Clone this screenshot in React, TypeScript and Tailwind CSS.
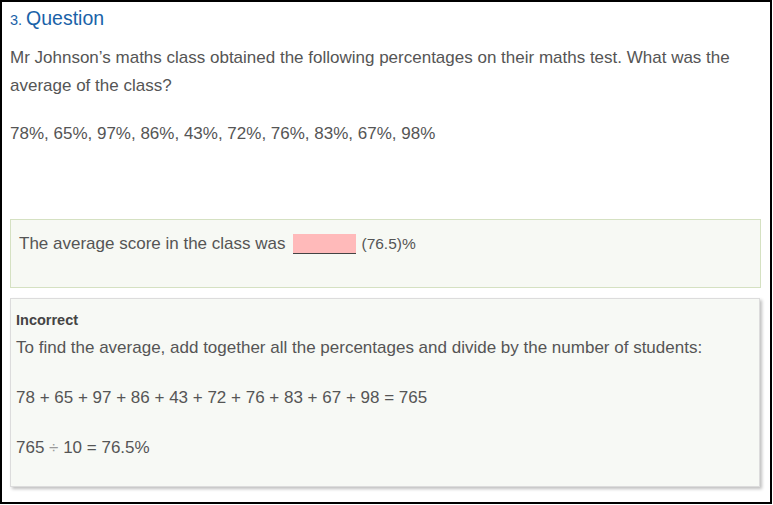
export default function App() {
  return (
    <div className="w-[773px] h-[505px] bg-white" style={{ fontFamily: '"Liberation Sans", Arial, sans-serif' }}>
      <div className="w-[772px] h-[504px] border-2 border-black bg-white px-[8px] flex flex-col">
        <div className="pt-[2px] h-[27px] flex items-baseline text-[#1a62a8]">
          <span className="text-[14.5px]">3.</span>
          <span className="text-[19.5px] ml-[4px]">Question</span>
        </div>
        <p className="mt-[15px] text-[17px] leading-[28px] text-[#555]">
          Mr Johnson’s maths class obtained the following percentages on their maths test. What was the average of the class?
        </p>
        <p className="mt-[20px] text-[17px] leading-[28px] text-[#555]">
          78%, 65%, 97%, 86%, 43%, 72%, 76%, 83%, 67%, 98%
        </p>
        <div className="mt-[71px] w-[751px] h-[69px] border border-[#d5e1c2] bg-[#f7f9f4] px-[8px] pt-[11px]">
          <div className="flex items-center text-[17px] text-[#555]">
            <span>The average score in the class was</span>
            <span className="ml-[8px] w-[63px] h-[20px] bg-[#ffbaba] border-b-[1.5px] border-[#444]" />
            <span className="ml-[5px] text-[15.5px]">(76.5)%</span>
          </div>
        </div>
        <div className="mt-[10px] w-[750px] h-[189px] border border-[#dcdcdc] bg-[#f7f9f5] shadow-[2px_2px_3px_rgba(0,0,0,0.25)] px-[5px] pt-[11px] text-[#555]">
          <div className="text-[14.5px] font-bold leading-[20px] text-[#444]">Incorrect</div>
          <div className="text-[17px] leading-[28px] mt-[4px]">
            To find the average, add together all the percentages and divide by the number of students:
          </div>
          <div className="text-[17px] leading-[28px] mt-[22px]">
            78 + 65 + 97 + 86 + 43 + 72 + 76 + 83 + 67 + 98 = 765
          </div>
          <div className="text-[17px] leading-[28px] mt-[22px]">
            765 <span className="text-[#999]">÷</span> 10 = 76.5%
          </div>
        </div>
      </div>
    </div>
  );
}
